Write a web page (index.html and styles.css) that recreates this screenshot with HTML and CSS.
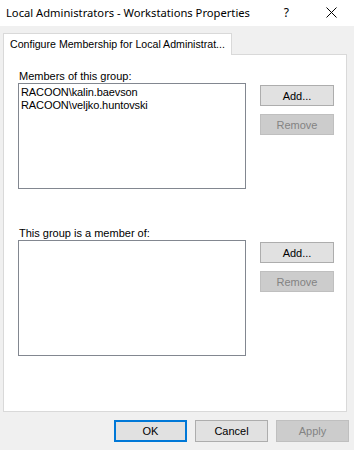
FILE: index.html
```html
<!DOCTYPE html>
<html>
<head>
<meta charset="utf-8">
<link rel="stylesheet" href="styles.css">
</head>
<body>
<div class="window">
  <div class="titlebar">
    <span class="title">Local Administrators - Workstations Properties</span>
    <span class="help">?</span>
    <svg class="close" width="11" height="11" viewBox="0 0 11 11"><path d="M0.5 0.5 L10.5 10.5 M10.5 0.5 L0.5 10.5" stroke="#000" stroke-width="1" fill="none"/></svg>
  </div>
  <div class="tabs">
    <div class="tab">Configure Membership for Local Administrat...</div>
  </div>
  <div class="panel">
    <div class="section">
      <div class="label">Members of this group:</div>
      <div class="row">
        <div class="listbox lb1">
          <div class="item">RACOON\kalin.baevson</div>
          <div class="item">RACOON\veljko.huntovski</div>
        </div>
        <div class="side">
          <div class="btn">Add...</div>
          <div class="btn disabled">Remove</div>
        </div>
      </div>
    </div>
    <div class="section sec2">
      <div class="label">This group is a member of:</div>
      <div class="row">
        <div class="listbox lb2"></div>
        <div class="side">
          <div class="btn">Add...</div>
          <div class="btn disabled">Remove</div>
        </div>
      </div>
    </div>
  </div>
  <div class="footer">
    <div class="btn default">OK</div>
    <div class="btn">Cancel</div>
    <div class="btn disabled">Apply</div>
  </div>
</div>
</body>
</html>
```
FILE: styles.css
```css
html, body {
  margin: 0;
  padding: 0;
}
body {
  width: 354px;
  height: 450px;
  background: #f0f0f0;
  font-family: "Liberation Sans", Arial, sans-serif;
  font-size: 11px;
  color: #000;
  overflow: hidden;
}
.titlebar {
  height: 26px;
  background: #fff;
  display: flex;
  align-items: center;
  padding-left: 6px;
  padding-bottom: 2px;
  box-sizing: border-box;
}
.title {
  font-family: "Noto Sans", "Open Sans", sans-serif;
  font-size: 11.2px;
  flex: 1;
  white-space: nowrap;
}
.help {
  font-family: "Noto Sans", sans-serif;
  font-size: 12px;
  margin-right: 37px;
}
.close {
  margin-right: 17px;
}
.tabs {
  display: flex;
  padding-left: 3px;
  margin-top: 7px;
}
.tab {
  position: relative;
  z-index: 1;
  background: #fff;
  border: 1px solid #d9d9d9;
  border-bottom: none;
  height: 22px;
  box-sizing: border-box;
  width: 229px;
  padding: 4px 0 0 6px;
  margin-bottom: -1px;
  white-space: nowrap;
  font-size: 10.6px;
}
.panel {
  margin: 0 7px 0 3px;
  height: 358px;
  box-sizing: border-box;
  background: #fff;
  border: 1px solid #d9d9d9;
  padding: 15px 0 0 14px;
}
.label {
  height: 13px;
  line-height: 13px;
  padding-left: 1px;
}
.row {
  display: flex;
}
.listbox {
  width: 228px;
  box-sizing: border-box;
  border: 1px solid #828790;
  background: #fff;
  padding: 2px 0 0 2px;
}
.lb1 { height: 106px; }
.lb2 { height: 116px; }
.item {
  line-height: 13px;
  letter-spacing: -0.1px;
}
.sec2 {
  margin-top: 38px;
}
.side {
  margin-left: 14px;
  padding-top: 2px;
  display: flex;
  flex-direction: column;
  gap: 8px;
}
.btn {
  width: 74px;
  height: 21px;
  box-sizing: border-box;
  background: #e1e1e1;
  border: 1px solid #adadad;
  display: flex;
  align-items: center;
  justify-content: center;
}
.btn.disabled {
  background: #cccccc;
  border-color: #bfbfbf;
  color: #838383;
}
.footer {
  display: flex;
  justify-content: flex-end;
  gap: 8px;
  padding-right: 5px;
  margin-top: 8px;
}
.footer .btn {
  width: 73px;
  height: 22px;
}
.btn.default {
  border: 2px solid #0078d7;
}
```
